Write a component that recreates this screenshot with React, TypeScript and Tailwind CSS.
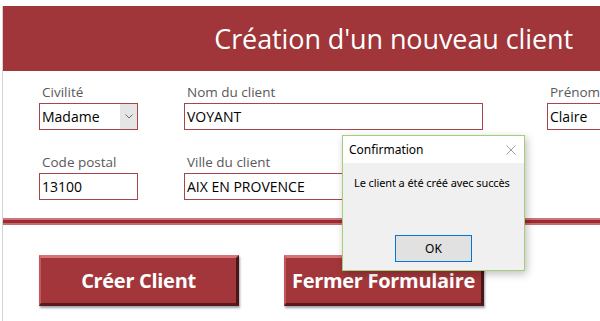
import React from 'react'

const font = { fontFamily: '"Open Sans", "Noto Sans", sans-serif' }

function Field({ label, value, width, select }: { label: string; value: string; width: string; select?: boolean }) {
    return (
        <div className={`flex shrink-0 flex-col ${width}`}>
            <span className="whitespace-nowrap pl-[3px] text-[13.5px] leading-[17px] text-[#595959]">{label}</span>
            <div className="mt-[2px] flex h-[27px] items-stretch border border-[#a8454a] bg-white">
                <span className="flex-1 pl-[2px] text-[14px] leading-[25px] text-black">{value}</span>
                {select && (
                    <span className="flex w-[17px] items-center justify-center bg-[#e5e5e5]">
                        <svg width="8" height="5" viewBox="0 0 8 5">
                            <path d="M0.5 0.5 L4 4 L7.5 0.5" fill="none" stroke="#707070" strokeWidth="1" />
                        </svg>
                    </span>
                )}
            </div>
        </div>
    )
}

function BigButton({ text }: { text: string }) {
    return (
        <div className="flex h-[51px] w-[200px] shrink-0 items-center justify-center border-t-[3px] border-l-2 border-r-[3px] border-b-[3px] border-t-[#d77478] border-l-[#c0585c] border-r-[#4a1618] border-b-[#5a1a1d] bg-[#a3363b] shadow-[1px_2px_2px_rgba(60,70,90,0.5)]">
            <span className="text-[20px] font-bold tracking-[-0.3px] text-white">{text}</span>
        </div>
    )
}

export default function App() {
    return (
        <div className="relative h-[321px] w-[600px] overflow-hidden bg-white" style={font}>
            <div className="ml-[2px] mt-[6px] h-[315px] border-l border-[#d4d4d4]">
                <div className="flex h-[65px] items-center justify-end bg-[#a0353a] pr-[27px]">
                    <h1 className="whitespace-nowrap text-[27px] font-normal leading-none tracking-[-0.1px] text-white">Création d'un nouveau client</h1>
                </div>

                <div className="flex flex-col gap-[24px] pl-[36px] pt-[13px]">
                    <div className="flex gap-[46px]">
                        <Field label="Civilité" value="Madame" width="w-[99px]" select />
                        <Field label="Nom du client" value="VOYANT" width="w-[299px]" />
                        <div className="ml-[18px] shrink-0">
                            <Field label="Prénom" value="Claire" width="w-[80px]" />
                        </div>
                    </div>
                    <div className="flex gap-[46px]">
                        <Field label="Code postal" value="13100" width="w-[99px]" />
                        <Field label="Ville du client" value="AIX EN PROVENCE" width="w-[299px]" />
                    </div>
                </div>

                <div className="mt-[18px] h-[7px] border-t-2 border-b-2 border-t-[#c9767a] border-b-[#c46d71] bg-[#9d2a30]" />

                <div className="mt-[30px] flex gap-[45px] pl-[36px]">
                    <BigButton text="Créer Client" />
                    <BigButton text="Fermer Formulaire" />
                </div>
            </div>

            <div className="absolute left-[342px] top-[135px] flex h-[136px] w-[183px] flex-col border border-[#a4cf78] bg-[#f0f0f0] shadow-[2px_3px_8px_rgba(0,0,0,0.25)]" style={{ fontFamily: '"Noto Sans", "Open Sans", sans-serif' }}>
                <div className="flex h-[27px] items-center justify-between bg-white pl-[6px] pr-[8px]">
                    <span className="text-[12px] text-black">Confirmation</span>
                    <svg width="10" height="10" viewBox="0 0 10 10">
                        <path d="M0.5 0.5 L9.5 9.5 M9.5 0.5 L0.5 9.5" stroke="#a0a0a0" strokeWidth="1" />
                    </svg>
                </div>
                <div className="whitespace-nowrap pl-[11px] pt-[12px] text-[11px] tracking-[-0.1px] text-black">Le client a été créé avec succès</div>
                <div className="mt-auto mb-[8px] ml-[52px] flex h-[27px] w-[77px] items-center justify-center border border-[#0078d7] bg-[#e1e1e1] text-[12px] text-black">
                    OK
                </div>
            </div>
        </div>
    )
}
